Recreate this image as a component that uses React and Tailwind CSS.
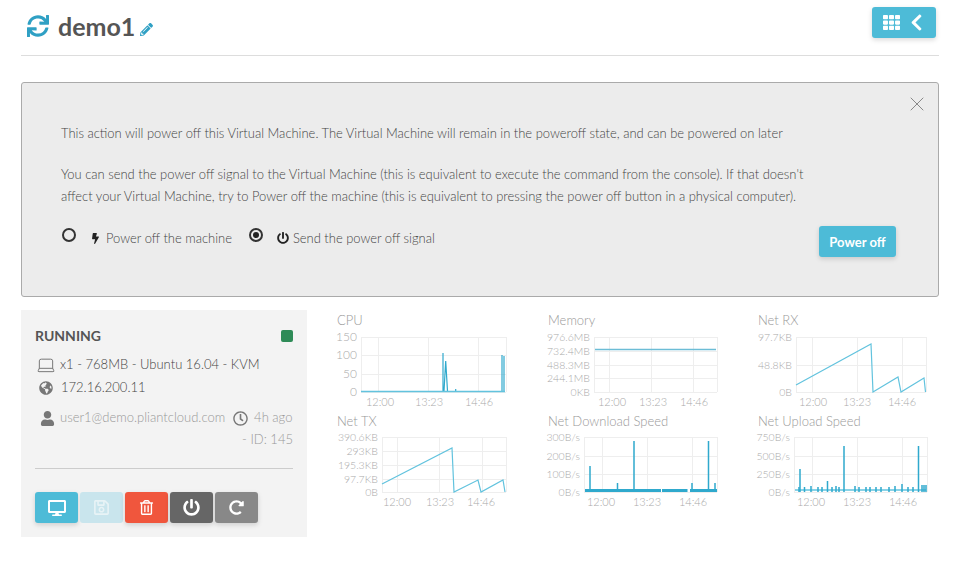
import {
  FaSync, FaPencilAlt, FaTh, FaChevronLeft, FaBolt, FaPowerOff, FaGlobeAmericas,
  FaUser, FaRegClock, FaDesktop, FaRegSave, FaRegTrashAlt, FaRedoAlt,
} from "react-icons/fa";
import { Laptop, X } from "lucide-react";

const LINE = "#62c3de";
const DARK = "#2fa9cd";

// Coordinates below are page pixels, the viewBox shifts them into each cell.
const charts = [
  {
    title: "CPU", ox: 337, oy: 330, left: 361, right: 506, top: 338, bottom: 393, labelSize: 12,
    vx: [378, 428, 478], hy: [338, 356, 375, 393], labels: ["150", "100", "50", "0"],
    ticks: [380, 429, 479],
    paths: [
      { d: "M443 392V354M444 392L445.7 362L447.5 392M455.7 392V390M502 392V356M504 392V357", stroke: DARK, w: 1.2 },
      { d: "M361 392.5H505", stroke: LINE, w: 1.5 },
    ],
  },
  {
    title: "Memory", ox: 548, oy: 330, left: 594, right: 717, top: 338, bottom: 393, labelSize: 10.5,
    vx: [609, 651, 693], hy: [338, 352, 366, 379, 393],
    labels: ["976.6MB", "732.4MB", "488.3MB", "244.1MB", "0KB"],
    ticks: [612, 653, 694],
    paths: [{ d: "M595 350.5H716", stroke: "#6cbdd6", w: 1.5 }],
  },
  {
    title: "Net RX", ox: 758, oy: 330, left: 796, right: 926, top: 338, bottom: 393, labelSize: 10.5,
    vx: [812, 857, 902], hy: [338, 366, 393], labels: ["97.7KB", "48.8KB", "0B"],
    ticks: [813, 857, 902],
    paths: [{ d: "M796 386L871 345L873 393L898 378L901 393L924 379L925.5 393", stroke: LINE, w: 1.2 }],
  },
  {
    title: "Net TX", ox: 337, oy: 431, left: 382, right: 506, top: 438, bottom: 493, labelSize: 10.5,
    vx: [397, 439, 482], hy: [438, 452, 466, 480, 493],
    labels: ["390.6KB", "293KB", "195.3KB", "97.7KB", "0B"],
    ticks: [397, 440, 481],
    paths: [{ d: "M382 485L452 449L454 493L478 481L481 493L503 481L505 493", stroke: LINE, w: 1.2 }],
  },
  {
    title: "Net Download Speed", ox: 548, oy: 431, left: 584, right: 717, top: 438, bottom: 493, labelSize: 10.5,
    vx: [602, 647, 692], hy: [438, 457, 475, 493], labels: ["300B/s", "200B/s", "100B/s", "0B/s"],
    ticks: [601, 647, 693],
    paths: [
      { d: "M585 491.5H661M662 491.5H687.5M690 491.5H717", stroke: DARK, w: 3 },
      { d: "M590 491V467M617.5 491V484M634 491V442M692 491V484M708.5 491V442M715 491V484", stroke: DARK, w: 1.5 },
    ],
  },
  {
    title: "Net Upload Speed", ox: 758, oy: 431, left: 794, right: 927, top: 438, bottom: 493, labelSize: 10.5,
    vx: [812, 857, 902], hy: [438, 457, 475, 493], labels: ["750B/s", "500B/s", "250B/s", "0B/s"],
    ticks: [811, 857, 903],
    paths: [
      { d: "M795 491H926", stroke: LINE, w: 1.5 },
      { d: "M799 493V488M804.5 493V488M811 493V487M818 493V488M822 493V488M832 493V488M836 493V487M839 493V488M855 493V487M859 493V488M866 493V488M870 493V488M876 493V488M881 493V488M889 493V488M895 493V487M908 493V488M913 493V488M922 493V486M924 493V486M926 493V486", stroke: DARK, w: 1.5 },
      { d: "M800 493V470M827.5 493V482M844 493V447M902 493V485M918.5 493V447", stroke: DARK, w: 1.5 },
    ],
  },
];

function Chart({ chart }) {
  const { title, ox, oy, left, right, top, bottom, labelSize, vx, hy, labels, ticks, paths } = chart;
  return (
    <div>
      <div className="h-[19px] text-[13px] leading-[21px] font-light text-[#999]">{title}</div>
      <svg width="181" height="82" viewBox={`${ox} ${oy} 181 82`} className="block overflow-visible">
        {hy.map((y) => (
          <line key={y} x1={left} x2={right} y1={y + 0.5} y2={y + 0.5} stroke="#eeeeee" />
        ))}
        {vx.map((x) => (
          <line key={x} x1={x + 0.5} x2={x + 0.5} y1={top} y2={bottom} stroke="#eeeeee" />
        ))}
        <line x1={left + 0.5} x2={left + 0.5} y1={top} y2={bottom} stroke="#eeeeee" />
        <line x1={right + 0.5} x2={right + 0.5} y1={top} y2={bottom} stroke="#eeeeee" />
        {labels.map((label, i) => (
          <text key={label} x={left - 4} y={hy[i] + 4} textAnchor="end" fontSize={labelSize} fontWeight="300" fill="#aaaaaa">
            {label}
          </text>
        ))}
        {["12:00", "13:23", "14:46"].map((t, i) => (
          <text key={t} x={ticks[i]} y={bottom + 14} textAnchor="middle" fontSize="11" fontWeight="300" fill="#aaaaaa">
            {t}
          </text>
        ))}
        {paths.map((p, i) => (
          <path key={i} d={p.d} fill="none" stroke={p.stroke} strokeWidth={p.w} />
        ))}
      </svg>
    </div>
  );
}

function Radio({ checked }) {
  return (
    <span className="flex h-[14px] w-[14px] items-center justify-center rounded-full border-2 border-[#333]">
      {checked && <span className="h-[6px] w-[6px] rounded-full bg-[#222]" />}
    </span>
  );
}

function ActionButton({ className, children }) {
  return (
    <button className={`flex h-[31px] items-center justify-center rounded-[3px] text-[17px] text-white shadow-[0_2px_5px_rgba(0,0,0,0.15)] ${className}`}>
      {children}
    </button>
  );
}

export default function App() {
  return (
    <div className="h-[563px] w-[963px] overflow-hidden bg-white pl-[21px] pr-[24px] font-['Lato',sans-serif] text-[#555]">
      {/* Header */}
      <div className="flex h-[56px] items-start justify-between border-b border-[#dddddd]">
        <div className="flex items-center pl-[6px] pt-[11px]">
          <FaSync className="text-[22px] text-[#2fa0c4]" />
          <span className="ml-[9px] text-[25px] leading-[30px] font-bold text-[#555]">demo1</span>
          <FaPencilAlt className="ml-[5px] mt-[6px] text-[13px] text-[#2fa0c4]" />
        </div>
        <button className="mr-[3px] mt-[7px] flex h-[31px] w-[64px] items-center justify-center gap-[7px] rounded-[3px] bg-[#4dbbd7] text-white shadow-[0_2px_5px_rgba(0,0,0,0.15)]">
          <FaTh className="text-[17px]" />
          <FaChevronLeft className="text-[19px]" />
        </button>
      </div>

      {/* Power off panel */}
      <div className="relative mt-[26px] h-[215px] rounded-[3px] border border-[#aaaaaa] bg-[#ececec] pl-[39px] pt-[39px] text-[12.96px] leading-[22px] font-light text-[#444]">
        <X className="absolute right-[9px] top-[9px] h-[24px] w-[24px] text-[#888]" strokeWidth={1} />
        <p>This action will power off this Virtual Machine. The Virtual Machine will remain in the poweroff state, and can be powered on later</p>
        <p className="mt-[19px]">You can send the power off signal to the Virtual Machine (this is equivalent to execute the command from the console). If that doesn't</p>
        <p>affect your Virtual Machine, try to Power off the machine (this is equivalent to pressing the power off button in a physical computer).</p>
        <div className="mt-[20px] flex items-center">
          <div className="flex items-center">
            <span className="-mt-[6px] ml-[1px]"><Radio /></span>
            <FaBolt className="ml-[14px] mr-[5px] text-[11px] text-[#222]" />
            <span>Power off the machine</span>
          </div>
          <div className="ml-[17px] flex items-center">
            <span className="-mt-[6px]"><Radio checked /></span>
            <FaPowerOff className="ml-[14px] mr-[4px] text-[12px] text-[#222]" />
            <span>Send the power off signal</span>
          </div>
        </div>
        <button className="absolute left-[797px] top-[143px] h-[31px] w-[77px] rounded-[3px] bg-[#4dbbd7] text-[13px] font-bold text-white shadow-[0_2px_5px_rgba(0,0,0,0.15)]">
          Power off
        </button>
      </div>

      <div className="mt-[13px] flex items-start">
        {/* Status card */}
        <div className="h-[227px] w-[286px] shrink-0 bg-[#f3f3f3] px-[14px] pt-[16px] text-[13px] font-light">
          <div className="flex items-center justify-between">
            <span className="text-[14px] font-bold leading-[20px] text-[#555]">RUNNING</span>
            <span className="h-[12px] w-[12px] rounded-[2px] bg-[#2e8b57]" />
          </div>
          <div className="mt-[9px] flex h-[20px] items-center text-[#444]">
            <Laptop className="ml-[1px] h-[20px] w-[20px] text-[#777]" strokeWidth={1.2} />
            <span className="ml-[4px]">x1 - 768MB - Ubuntu 16.04 - KVM</span>
          </div>
          <div className="mt-[3px] flex h-[20px] items-center text-[#444]">
            <FaGlobeAmericas className="ml-[4px] text-[14px] text-[#777]" />
            <span className="ml-[8px]">172.16.200.11</span>
          </div>
          <div className="mt-[10px] flex h-[20px] items-center whitespace-nowrap text-[#999]">
            <FaUser className="ml-[5px] text-[15px] text-[#777]" />
            <span className="ml-[5px]">user1@demo.pliantcloud.com</span>
            <FaRegClock className="ml-[8px] text-[15px] text-[#777]" />
            <span className="ml-[6px]">4h ago</span>
          </div>
          <div className="mt-[1px] text-right leading-[20px] text-[#999]">- ID: 145</div>
          <div className="mt-[19px] border-t border-[#cccccc]" />
          <div className="mt-[23px] flex gap-[2px]">
            <ActionButton className="w-[43px] bg-[#4dbbd7]"><FaDesktop className="text-[18px]" /></ActionButton>
            <ActionButton className="w-[43px] bg-[#c9e5ed] shadow-none"><FaRegSave className="text-[#e8f3f6]" /></ActionButton>
            <ActionButton className="w-[43px] bg-[#f0563d]"><FaRegTrashAlt className="text-[15px]" /></ActionButton>
            <ActionButton className="w-[43px] bg-[#666666]"><FaPowerOff /></ActionButton>
            <ActionButton className="w-[43px] bg-[#888888]"><FaRedoAlt className="text-[15px]" /></ActionButton>
          </div>
        </div>

        {/* Charts */}
        <div className="ml-[30px] grid grid-cols-[211px_210px_181px] gap-y-0">
          {charts.map((chart) => (
            <Chart key={chart.title} chart={chart} />
          ))}
        </div>
      </div>
    </div>
  );
}
